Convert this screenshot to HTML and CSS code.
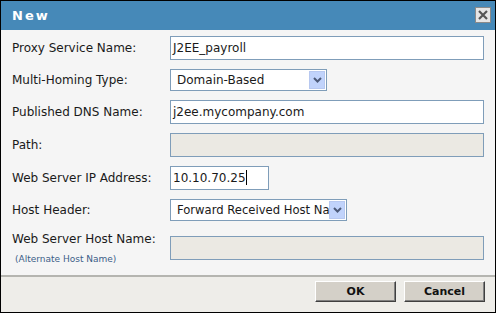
FILE: index.html
```html
<!DOCTYPE html>
<html lang="en">
<head>
    <meta charset="UTF-8">
    <title>New</title>
    <link rel="stylesheet" href="styles.css">
</head>
<body>

    <div class="dialog">
        <div class="titlebar">
            <span class="title">New</span>
            <span class="close-btn">
                <svg width="12" height="12" viewBox="0 0 12 12"><path d="M2 2 L10 10 M10 2 L2 10" stroke="#555" stroke-width="2.2"/></svg>
            </span>
        </div>

        <div class="form">
            <div class="label">Proxy Service Name:</div>
            <div class="field text-field">J2EE_payroll</div>

            <div class="label">Multi-Homing Type:</div>
            <div class="select select-short">
                <span class="select-text">Domain-Based</span>
                <span class="arrow"><svg width="9" height="6" viewBox="0 0 9 6"><path d="M1 1 L4.5 4.5 L8 1" fill="none" stroke="#4d5a78" stroke-width="2"/></svg></span>
            </div>

            <div class="label">Published DNS Name:</div>
            <div class="field text-field">j2ee.mycompany.com</div>

            <div class="label">Path:</div>
            <div class="field disabled"></div>

            <div class="label">Web Server IP Address:</div>
            <div class="field text-field ip-field">10.10.70.25<span class="caret"></span></div>

            <div class="label">Host Header:</div>
            <div class="select select-long">
                <span class="select-text">Forward Received Host Name</span>
                <span class="arrow"><svg width="9" height="6" viewBox="0 0 9 6"><path d="M1 1 L4.5 4.5 L8 1" fill="none" stroke="#4d5a78" stroke-width="2"/></svg></span>
            </div>

            <div class="label label-top">
                Web Server Host Name:
                <div class="note">(Alternate Host Name)</div>
            </div>
            <div class="field disabled"></div>
        </div>

        <div class="footer">
            <button class="btn">OK</button>
            <button class="btn">Cancel</button>
        </div>
    </div>

</body>
</html>
```

FILE: styles.css
```css
html, body {
    margin: 0;
    padding: 0;
}

body {
    font-family: 'DejaVu Sans', Verdana, sans-serif;
    font-size: 12px;
    color: #1a1a1a;
    background-color: #fff;
}

.dialog {
    width: 496px;
    height: 313px;
    box-sizing: border-box;
    border: 1px solid #000;
    background-color: #f5f5f5;
    display: flex;
    flex-direction: column;
}

.titlebar {
    height: 29px;
    background-color: #4689b8;
    display: flex;
    align-items: center;
    justify-content: space-between;
    padding: 0 4px 0 11px;
}

.title {
    color: #fff;
    font-weight: bold;
    font-size: 13px;
    letter-spacing: 2px;
}

.close-btn {
    width: 14px;
    height: 14px;
    border: 1px solid #8a8a8a;
    background-color: #e6e6e6;
    display: flex;
    align-items: center;
    justify-content: center;
    margin-top: -1px;
}

.form {
    flex: 1;
    display: grid;
    grid-template-columns: 158px 314px;
    row-gap: 9px;
    align-items: center;
    align-content: start;
    padding: 6px 0 0 11px;
}

.label {
    line-height: 16px;
    white-space: nowrap;
}

.label-top {
    align-self: start;
    line-height: 14px;
    padding-top: 2px;
}

.note {
    font-size: 9px;
    line-height: 11px;
    color: #3c5e88;
    margin: 8px 0 0 3px;
}

.field {
    height: 24px;
    box-sizing: border-box;
    border: 1px solid #7f9db9;
    background-color: #fff;
    line-height: 22px;
    padding-left: 2px;
    white-space: nowrap;
    overflow: hidden;
}

.disabled {
    background-color: #ebe9e3;
}

.ip-field {
    width: 99px;
}

.caret {
    display: inline-block;
    width: 1px;
    height: 15px;
    background-color: #000;
    vertical-align: -3px;
}

.select {
    height: 22px;
    box-sizing: border-box;
    border: 1px solid #7f9db9;
    background-color: #fff;
    display: flex;
    align-items: center;
    justify-content: space-between;
    padding: 0 1px 0 6px;
    overflow: hidden;
}

.select-short {
    width: 157px;
}

.select-long {
    width: 177px;
    font-size: 11.6px;
}

.select-text {
    white-space: nowrap;
    overflow: hidden;
    flex: 1;
}

.arrow {
    width: 16px;
    height: 18px;
    background-color: #c1d3fb;
    border: 1px solid #b7c8f0;
    box-sizing: border-box;
    display: flex;
    align-items: center;
    justify-content: center;
    flex-shrink: 0;
}

.footer {
    height: 31px;
    border-top: 2px solid #b5b5b0;
    background-color: #eeede9;
    display: flex;
    justify-content: flex-end;
    align-items: flex-start;
    gap: 8px;
    padding: 4px 10px 0 0;
}

.btn {
    width: 81px;
    height: 21px;
    font-family: 'DejaVu Sans', Verdana, sans-serif;
    font-size: 11px;
    font-weight: bold;
    color: #111;
    background-color: #d4d0c8;
    border: 1px solid;
    border-color: #fff #404040 #404040 #fff;
    box-shadow: inset -1px -1px 0 #808080;
    padding: 0;
}
```
